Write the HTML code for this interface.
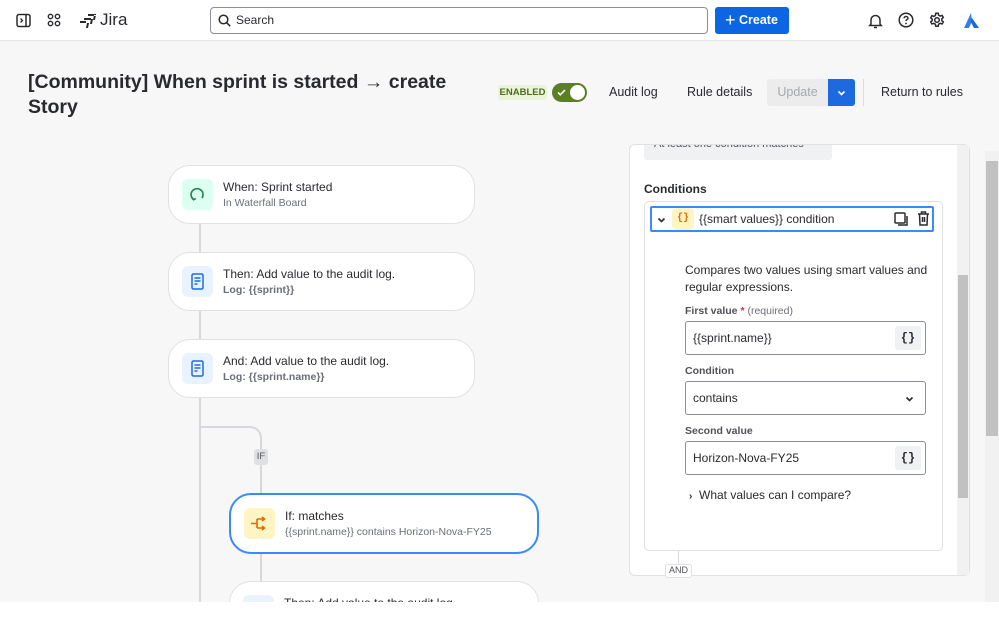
<!DOCTYPE html>
<html><head><meta charset="utf-8"><style>
*{box-sizing:border-box;margin:0;padding:0}
body{width:999px;height:627px;overflow:hidden;background:#fff;font-family:"Segoe UI","Liberation Sans",sans-serif;color:#172b4d;position:relative}
.abs{position:absolute}
.top{left:0;top:0;width:999px;height:41px;background:#fff;border-bottom:1px solid #e4e5e8}
.main{left:0;top:41px;width:999px;height:561px;background:#f7f7f7;overflow:hidden}
.card{position:absolute;background:#fff;border:1px solid #dfe1e4;border-radius:22px;width:307px;height:59px}
.ic{position:absolute;left:13px;top:13px;width:31px;height:31px;border-radius:6px}
.t1{position:absolute;left:54px;top:14px;font-size:12px;color:#292a2e}
.t2{position:absolute;left:54px;top:31px;font-size:10.5px;color:#6b6e76}
.line{position:absolute;background:#d6d8dc}
.lbl{position:absolute;font-size:10.5px;color:#505258;font-weight:bold}
.inp{position:absolute;left:685px;width:241px;height:34px;border:1px solid #8c8f97;border-radius:3px;background:#fff;font-size:12px;padding:9px 7px;color:#292a2e}
.br{position:absolute;right:4px;top:4px;width:26px;height:24px;background:#f0f1f2;border-radius:3px;font:bold 12px "Liberation Mono",monospace;text-align:center;line-height:24px;color:#292a2e}
</style></head><body>
<div class="abs top">
 <svg class="abs" style="left:16px;top:13px" width="15" height="15" viewBox="0 0 15 15"><rect x="1" y="1.5" width="13" height="12" rx="2" fill="none" stroke="#292a2e" stroke-width="1.5"/><line x1="10" y1="2" x2="10" y2="13" stroke="#292a2e" stroke-width="1.5"/><path d="M4.5 5.5l2 2-2 2" fill="none" stroke="#292a2e" stroke-width="1.3"/></svg>
 <svg class="abs" style="left:47px;top:13px" width="14" height="14" viewBox="0 0 14 14" fill="none" stroke="#292a2e" stroke-width="1.4"><circle cx="3.5" cy="3.5" r="2.2"/><circle cx="10.5" cy="3.5" r="2.2"/><circle cx="3.5" cy="10.5" r="2.2"/><circle cx="10.5" cy="10.5" r="2.2"/></svg>
 <svg class="abs" style="left:79px;top:12px" width="18" height="17" viewBox="0 0 18 17" fill="#292a2e"><path d="M1 9h6v2H1zM5 6h7v2H5zM9 2h8v2H9zM8 11l-1 5h2l1-5zM12 7l-1 5h2l1-5zM15 3l-1 5h2l1-5z"/></svg>
 <div class="abs" style="left:100px;top:10px;font-size:17px;color:#292a2e">Jira</div>
 <div class="abs" style="left:210px;top:7px;width:498px;height:27px;border:1px solid #8c8f97;border-radius:4px"></div>
 <svg class="abs" style="left:218px;top:14px" width="13" height="13" viewBox="0 0 13 13" fill="none" stroke="#292a2e" stroke-width="1.5"><circle cx="5.5" cy="5.5" r="4.3"/><path d="M8.7 8.7l3.5 3.5"/></svg>
 <div class="abs" style="left:236px;top:13px;font-size:12px;color:#292a2e">Search</div>
 <div class="abs" style="left:715px;top:7px;width:74px;height:27px;background:#0c66e4;border-radius:3px;color:#fff;font-size:12.5px;font-weight:bold;line-height:27px;padding-left:10px"><span style="font-size:18px;font-weight:normal;vertical-align:-2px">+</span> Create</div>
 <svg class="abs" style="left:868px;top:13px" width="15" height="16" viewBox="0 0 15 16" fill="none" stroke="#292a2e" stroke-width="1.5"><path d="M3 11V7a4.5 4.5 0 019 0v4l1.2 1.5H1.8z"/><path d="M6 14.5h3"/></svg>
 <svg class="abs" style="left:898px;top:12px" width="16" height="16" viewBox="0 0 16 16"><circle cx="8" cy="8" r="6.8" fill="none" stroke="#292a2e" stroke-width="1.5"/><path d="M6 6.3a2 2 0 114 .3c-.5 1-2 1-2 2.4" fill="none" stroke="#292a2e" stroke-width="1.4"/><circle cx="8" cy="11.5" r=".9" fill="#292a2e"/></svg>
 <svg class="abs" style="left:929px;top:12px" width="16" height="16" viewBox="0 0 16 16" fill="none" stroke="#292a2e" stroke-width="1.5"><circle cx="8" cy="8" r="2.3"/><path d="M6.8 1.2h2.4l.4 2 1.6.9 1.9-.7 1.2 2.1-1.5 1.3v1.8l1.5 1.3-1.2 2.1-1.9-.7-1.6.9-.4 2H6.8l-.4-2-1.6-.9-1.9.7-1.2-2.1 1.5-1.3V7.1L1.7 5.8l1.2-2.1 1.9.7 1.6-.9z"/></svg>
 <svg class="abs" style="left:963px;top:12px" width="17" height="17" viewBox="0 0 17 17"><path d="M8 1L1 16h5l3-7z" fill="#357de8"/><path d="M9 6l-1.5 3.5L11 16h5z" fill="#1868db"/></svg>
</div>
<div class="abs main">
 <div class="abs" style="left:28px;top:29px;font-size:19.5px;font-weight:bold;color:#292a2e;line-height:25px">[Community] When sprint is started → create<br>Story</div>
 <div class="abs" style="left:498px;top:44px;width:49px;height:15px;background:#eaf5d8;border-radius:3px;font-size:9.5px;font-weight:bold;color:#4c6b1f;text-align:center;line-height:15px">ENABLED</div>
 <div class="abs" style="left:552px;top:42px;width:35px;height:19px;background:#5b7f24;border-radius:10px"><svg style="position:absolute;left:5px;top:6px" width="9" height="7" viewBox="0 0 9 7"><path d="M1 3.5l2.3 2.3L8 1" fill="none" stroke="#fff" stroke-width="1.6"/></svg><div style="position:absolute;right:2px;top:2px;width:15px;height:15px;background:#fff;border-radius:50%"></div></div>
 <div class="abs" style="left:609px;top:44px;font-size:12.5px;color:#292a2e">Audit log</div>
 <div class="abs" style="left:687px;top:44px;font-size:12.5px;color:#292a2e">Rule details</div>
 <div class="abs" style="left:767px;top:38px;width:61px;height:27px;background:#ececed;border-radius:3px 0 0 3px;color:#a5a8ad;font-size:12.5px;text-align:center;line-height:27px">Update</div>
 <div class="abs" style="left:828px;top:38px;width:27px;height:27px;background:#1d6ae0;border-radius:0 3px 3px 0"><svg style="position:absolute;left:9px;top:11px" width="9" height="6" viewBox="0 0 9 6"><path d="M1.5 1.5l3 3 3-3" fill="none" stroke="#fff" stroke-width="1.6"/></svg></div>
 <div class="abs" style="left:863px;top:38px;width:1px;height:27px;background:#dcdde0"></div>
 <div class="abs" style="left:881px;top:44px;font-size:12.5px;color:#292a2e">Return to rules</div>

 <div class="line" style="left:199px;top:180px;width:2px;height:390px"></div>
 <div class="abs" style="left:200px;top:385px;width:62px;height:30px;border-top:2px solid #d6d8dc;border-right:2px solid #d6d8dc;border-radius:0 12px 0 0"></div>
 <div class="line" style="left:260px;top:410px;width:2px;height:160px"></div>
 <div class="abs" style="left:254px;top:408px;width:14px;height:16px;background:#dfe0e3;border-radius:3px;font-size:9.5px;color:#505258;text-align:center;line-height:16px">IF</div>

 <div class="card" style="left:168px;top:124px"><div class="ic" style="background:#dcfff1"><svg style="position:absolute;left:7px;top:7px" width="17" height="17" viewBox="0 0 17 17" fill="none" stroke="#1f845a" stroke-width="1.6"><path d="M13 12a6 6 0 10-8.5 1.5"/><path d="M3 11.5l1.6 2.2 2.3-1.3"/></svg></div><div class="t1">When: Sprint started</div><div class="t2">In Waterfall Board</div></div>
 <div class="card" style="left:168px;top:211px"><div class="ic" style="background:#e9f2ff"><svg style="position:absolute;left:9px;top:7px" width="13" height="17" viewBox="0 0 13 17" fill="none" stroke="#1d6ae0" stroke-width="1.5"><rect x="1" y="1" width="11" height="15" rx="1.5"/><path d="M3.5 5h6M3.5 8h6M3.5 11h3"/></svg></div><div class="t1">Then: Add value to the audit log.</div><div class="t2" style="font-weight:bold">Log: {{sprint}}</div></div>
 <div class="card" style="left:168px;top:298px"><div class="ic" style="background:#e9f2ff"><svg style="position:absolute;left:9px;top:7px" width="13" height="17" viewBox="0 0 13 17" fill="none" stroke="#1d6ae0" stroke-width="1.5"><rect x="1" y="1" width="11" height="15" rx="1.5"/><path d="M3.5 5h6M3.5 8h6M3.5 11h3"/></svg></div><div class="t1">And: Add value to the audit log.</div><div class="t2" style="font-weight:bold">Log: {{sprint.name}}</div></div>
 <div class="card" style="left:229px;top:452px;width:310px;height:61px;border:2px solid #388bff"><div class="ic" style="background:#fff4c4"><svg style="position:absolute;left:6px;top:8px" width="19" height="15" viewBox="0 0 19 15" fill="none" stroke="#e06c00" stroke-width="1.6"><path d="M1 7.5h6M7 3v9M7 3h7M7 12h7M12 1l2.5 2-2.5 2M12 10l2.5 2-2.5 2"/></svg></div><div class="t1">If: matches</div><div class="t2">{{sprint.name}} contains Horizon-Nova-FY25</div></div>
 <div class="card" style="left:229px;top:540px;width:310px;height:59px"><div class="ic" style="background:#e9f2ff"></div><div class="t1">Then: Add value to the audit log.</div></div>

 <div class="abs" style="left:629px;top:103px;width:341px;height:432px;background:#fff;border:1px solid #dfe1e4;border-radius:6px;overflow:hidden">
  <div class="abs" style="left:14px;top:-8px;width:188px;height:23px;background:#f0f1f2;border-radius:3px;font-size:11px;color:#505258;padding:1px 10px">At least one condition matches</div>
  <div class="abs" style="left:14px;top:37px;font-size:12px;font-weight:bold;color:#292a2e">Conditions</div>
  <div class="abs" style="left:14px;top:56px;width:299px;height:350px;border:1px solid #dfe1e4;border-radius:5px"></div>
  <div class="abs" style="left:20px;top:61px;width:284px;height:26px;border:2px solid #388bff;border-radius:2px">
   <svg style="position:absolute;left:5px;top:9px" width="9" height="6" viewBox="0 0 9 6"><path d="M1.5 1.5l3 3 3-3" fill="none" stroke="#292a2e" stroke-width="1.6"/></svg>
   <div style="position:absolute;left:20px;top:0;width:22px;height:22px;background:#fff4c4;border-radius:5px;color:#e06c00;font:bold 10px 'Liberation Mono',monospace;text-align:center;line-height:22px">{}</div>
   <div style="position:absolute;left:47px;top:4px;font-size:12px;color:#292a2e">{{smart values}} condition</div>
   <svg style="position:absolute;left:242px;top:4px" width="14" height="14" viewBox="0 0 14 14" fill="none" stroke="#292a2e" stroke-width="1.5"><rect x="1" y="1" width="10" height="10" rx="1"/><path d="M4 13h9V4"/></svg>
   <svg style="position:absolute;left:265px;top:3px" width="13" height="15" viewBox="0 0 13 15" fill="none" stroke="#292a2e" stroke-width="1.5"><path d="M1 3h11M4.5 3V1h4v2M2.5 3l.5 11h7l.5-11M5.5 6v5M7.5 6v5"/></svg>
  </div>
 </div>
 <div class="abs" style="left:685px;top:221px;font-size:12px;color:#292a2e;line-height:17px;width:250px">Compares two values using smart values and regular expressions.</div>
 <div class="lbl" style="left:685px;top:264px">First value <span style="color:#c9372c">*</span> <span style="font-weight:normal;color:#6b6e76">(required)</span></div>
 <div class="inp" style="top:280px">{{sprint.name}}<div class="br">{}</div></div>
 <div class="lbl" style="left:685px;top:324px">Condition</div>
 <div class="inp" style="top:340px">contains<svg style="position:absolute;right:11px;top:14px" width="9" height="6" viewBox="0 0 9 6"><path d="M1.5 1.5l3 3 3-3" fill="none" stroke="#292a2e" stroke-width="1.6"/></svg></div>
 <div class="lbl" style="left:685px;top:384px">Second value</div>
 <div class="inp" style="top:400px">Horizon-Nova-FY25<div class="br">{}</div></div>
 <div class="abs" style="left:689px;top:447px;font-size:12px;color:#292a2e"><b style="font-size:10px">›</b>&nbsp;&nbsp;What values can I compare?</div>
 <div class="line" style="left:678px;top:510px;width:1px;height:20px"></div>
 <div class="abs" style="left:665px;top:523px;width:27px;height:14px;border:1px solid #dfe1e4;border-radius:3px;background:#fff;font-size:9px;color:#505258;text-align:center">AND</div>
 <div class="abs" style="left:957px;top:104px;width:12px;height:430px;background:#f1f1f1"></div>
 <div class="abs" style="left:958px;top:234px;width:10px;height:223px;background:#c1c1c1"></div>
 <div class="abs" style="left:985px;top:110px;width:14px;height:451px;background:#f1f1f1"></div>
 <div class="abs" style="left:986px;top:120px;width:12px;height:275px;background:#c1c1c1"></div>
</div>
</body></html>
